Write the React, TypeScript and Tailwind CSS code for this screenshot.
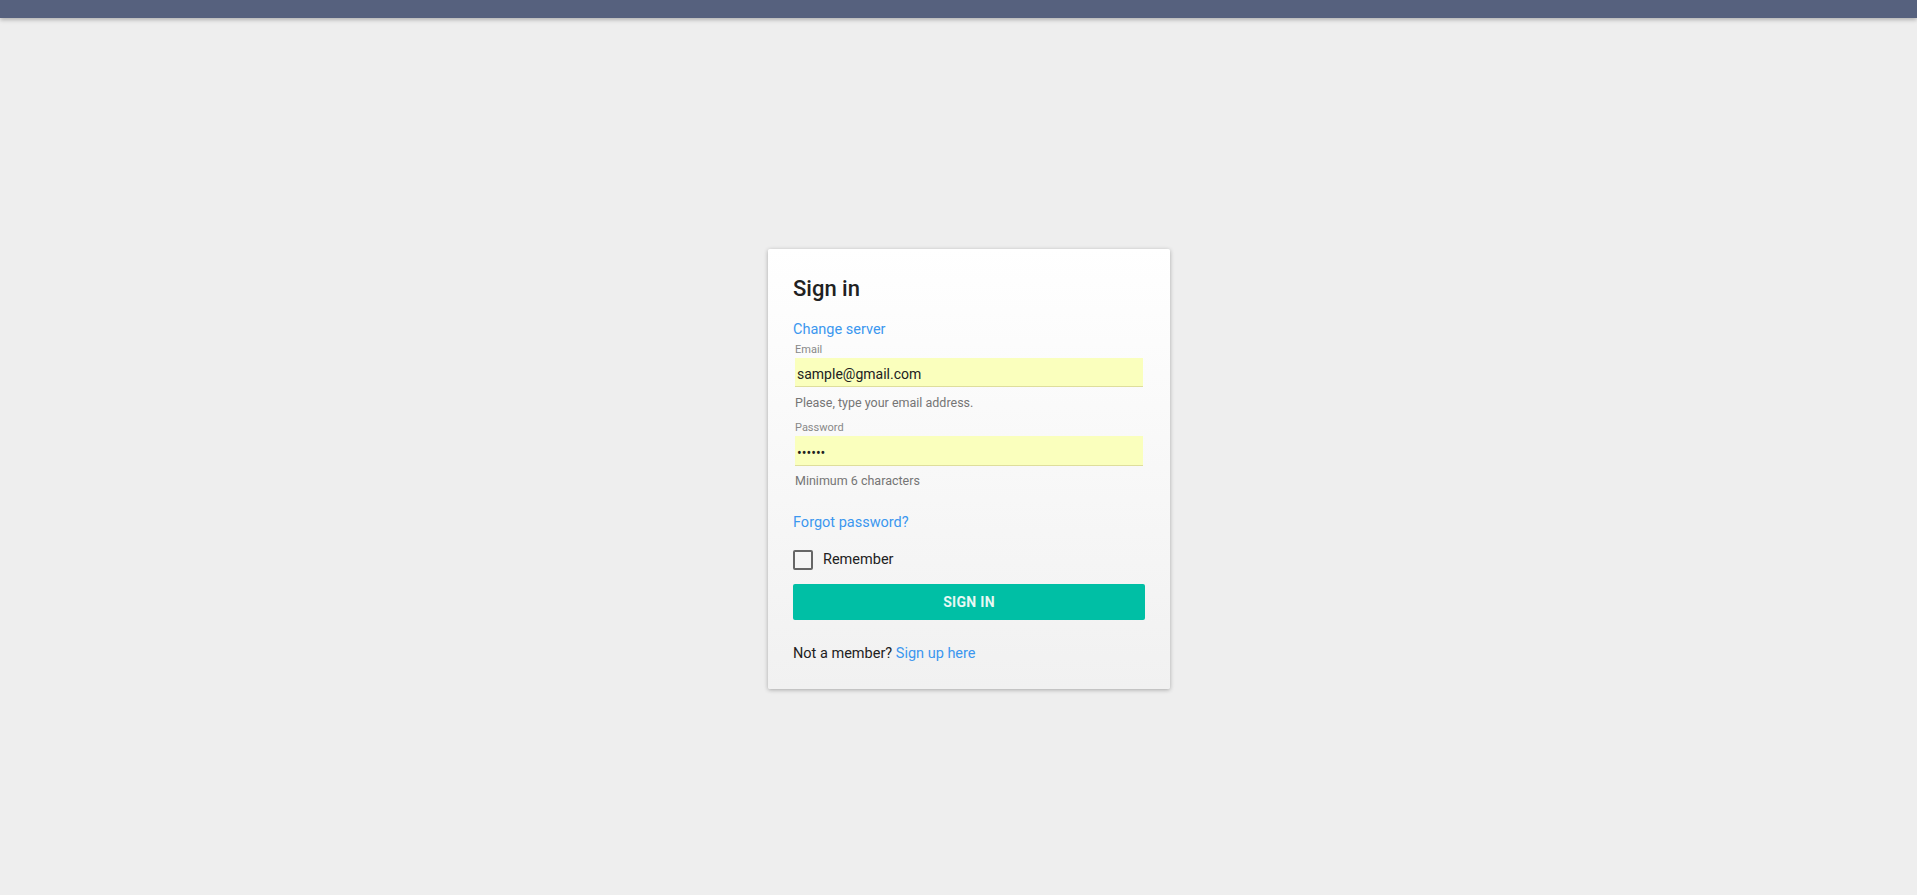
import React, { useState } from 'react';

export default function App() {
  const [email, setEmail] = useState('sample@gmail.com');
  const [password, setPassword] = useState('123456');
  const [remember, setRemember] = useState(false);

  return (
    <div className="min-h-screen bg-[#eeeeee] font-['Roboto',sans-serif]">
      {/* Top app bar */}
      <div className="h-[18px] bg-[#56617e] shadow-[0_2px_4px_rgba(0,0,0,0.25)]" />

      <div className="flex justify-center pl-[21px] pt-[231px]">
        <div className="w-[402px] bg-gradient-to-b from-white to-[#f1f1f1] rounded-[2px] shadow-[0_1px_4px_rgba(0,0,0,0.3)] px-[25px] pt-[26px] pb-[25px]">
          <h1 className="text-[22px] leading-[28px] font-medium text-[#212121]">Sign in</h1>

          <a href="#" className="block mt-[17px] text-[14.5px] leading-[20px] text-[#3b97ef]">
            Change server
          </a>

          {/* Email */}
          <div className="mx-[2px] mt-[3px]">
            <label className="block text-[11px] leading-[14px] text-[#888888]">Email</label>
            <input
              type="email"
              value={email}
              onChange={(e) => setEmail(e.target.value)}
              className="mt-[1px] block w-full h-[29px] bg-[#faffbd] border-b border-[#dede9c] px-[2px] pt-[4px] text-[14px] leading-[24px] text-[#212121] outline-none"
            />
            <p className="mt-[8px] text-[12.5px] leading-[16px] text-[#757575]">Please, type your email address.</p>
          </div>

          {/* Password */}
          <div className="mx-[2px] mt-[10px]">
            <label className="block text-[11px] leading-[14px] text-[#888888]">Password</label>
            <input
              type="password"
              value={password}
              onChange={(e) => setPassword(e.target.value)}
              className="mt-[1px] block w-full h-[30px] bg-[#faffbd] border-b border-[#dede9c] px-[2px] pt-[4px] text-[14px] leading-[24px] text-[#212121] outline-none"
            />
            <p className="mt-[7px] text-[12.5px] leading-[16px] text-[#757575]">Minimum 6 characters</p>
          </div>

          <a href="#" className="block mt-[24px] text-[14.5px] leading-[20px] text-[#3b97ef]">
            Forgot password?
          </a>

          <label className="mt-[17px] flex items-center gap-[10px] cursor-pointer">
            <span
              onClick={() => setRemember(!remember)}
              className="w-[20px] h-[20px] rounded-[2px] border-2 border-[#666666] flex items-center justify-center"
            >
              {remember && (
                <svg viewBox="0 0 24 24" className="w-[16px] h-[16px]" fill="none" stroke="#666666" strokeWidth="3">
                  <path d="M5 12l5 5L20 7" />
                </svg>
              )}
            </span>
            <span className="text-[14.5px] leading-[20px] text-[#212121]">Remember</span>
          </label>

          <button className="mt-[14px] w-full h-[36px] rounded-[2px] bg-[#00bfa5] text-[14px] font-bold tracking-[0.3px] text-[#e8f8f4]">
            SIGN IN
          </button>

          <p className="mt-[24px] text-[14.5px] leading-[20px] text-[#212121]">
            Not a member? <a href="#" className="text-[#3b97ef]">Sign up here</a>
          </p>
        </div>
      </div>
    </div>
  );
}
